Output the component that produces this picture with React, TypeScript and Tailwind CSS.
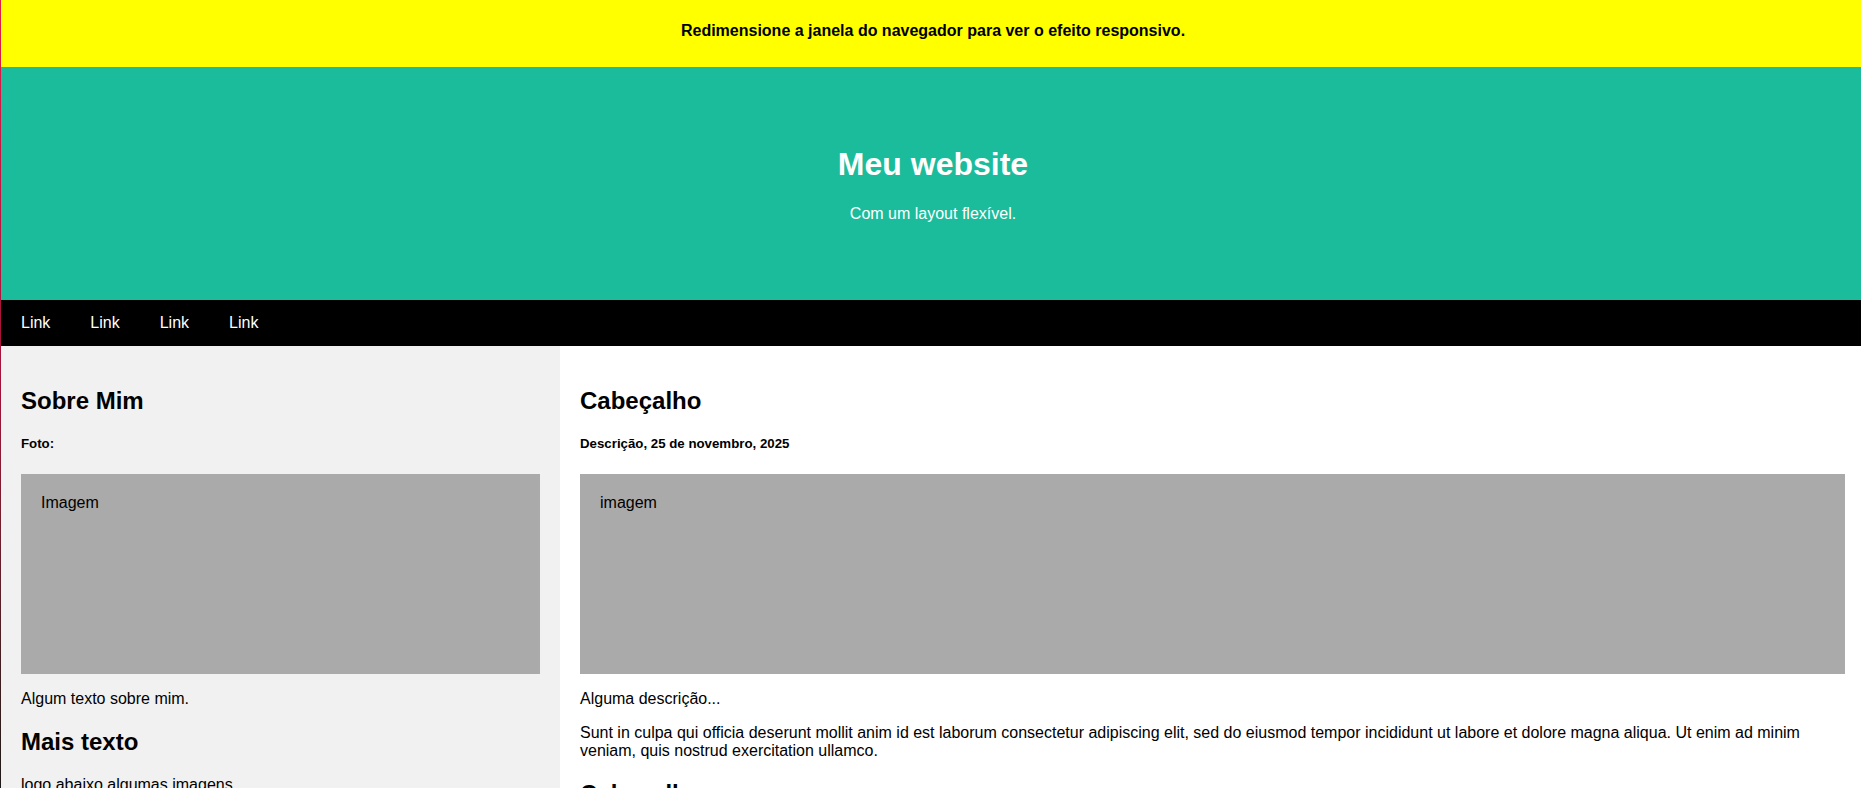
import React from "react";

export default function App() {
  return (
    <div className="w-[1861px] h-[788px] overflow-hidden flex bg-white font-['Liberation_Sans',Arial,sans-serif] text-black">
      <div className="w-px shrink-0 bg-gradient-to-b from-[#e11d48] via-[#9f1239] to-[#1c1917]" />
      <div className="w-[1864px] shrink-0 flex flex-col">
        <div className="h-[67px] shrink-0 bg-[#ffff00] pt-[22px] text-center text-[16px] font-bold leading-[normal]">
          Redimensione a janela do navegador para ver o efeito responsivo.
        </div>
        <header className="h-[233px] shrink-0 bg-[#1abc9c] text-white text-center pt-[79px]">
          <h1 className="text-[32px] font-bold leading-[normal]">Meu website</h1>
          <p className="mt-[22px] text-[16px] leading-[normal]">Com um layout flexível.</p>
        </header>
        <nav className="h-[46px] shrink-0 bg-black flex items-center">
          {["Link", "Link", "Link", "Link"].map((l, i) => (
            <a key={i} className="px-5 text-white text-[16px] leading-[normal]">
              {l}
            </a>
          ))}
        </nav>
        <div className="flex flex-1 shrink-0">
          <aside className="w-[559px] shrink-0 bg-[#f1f1f1] px-5 pt-5 text-[16px] leading-[normal]">
            <h2 className="mt-[21px] text-[24px] font-bold leading-[normal]">Sobre Mim</h2>
            <h5 className="mt-[21px] text-[13.28px] font-bold leading-[normal]">Foto:</h5>
            <div className="mt-[23px] h-[200px] bg-[#aaaaaa] p-5">Imagem</div>
            <p className="mt-4">Algum texto sobre mim.</p>
            <h2 className="mt-[20px] text-[24px] font-bold leading-[normal]">Mais texto</h2>
            <p className="mt-[20px]">logo abaixo algumas imagens</p>
          </aside>
          <main className="flex-1 bg-white pl-5 pr-5 pt-5 text-[16px] leading-[normal]">
            <h2 className="mt-[21px] text-[24px] font-bold leading-[normal]">Cabeçalho</h2>
            <h5 className="mt-[21px] text-[13.28px] font-bold leading-[normal]">
              Descrição, 25 de novembro, 2025
            </h5>
            <div className="mt-[23px] h-[200px] bg-[#aaaaaa] p-5">imagem</div>
            <p className="mt-4">Alguma descrição...</p>
            <p className="mt-4">
              Sunt in culpa qui officia deserunt mollit anim id est laborum consectetur adipiscing elit, sed do
              eiusmod tempor incididunt ut labore et dolore magna aliqua. Ut enim ad minim veniam, quis nostrud
              exercitation ullamco.
            </p>
            <h2 className="mt-[20px] text-[24px] font-bold leading-[normal]">Cabeçalho</h2>
          </main>
        </div>
      </div>
    </div>
  );
}
